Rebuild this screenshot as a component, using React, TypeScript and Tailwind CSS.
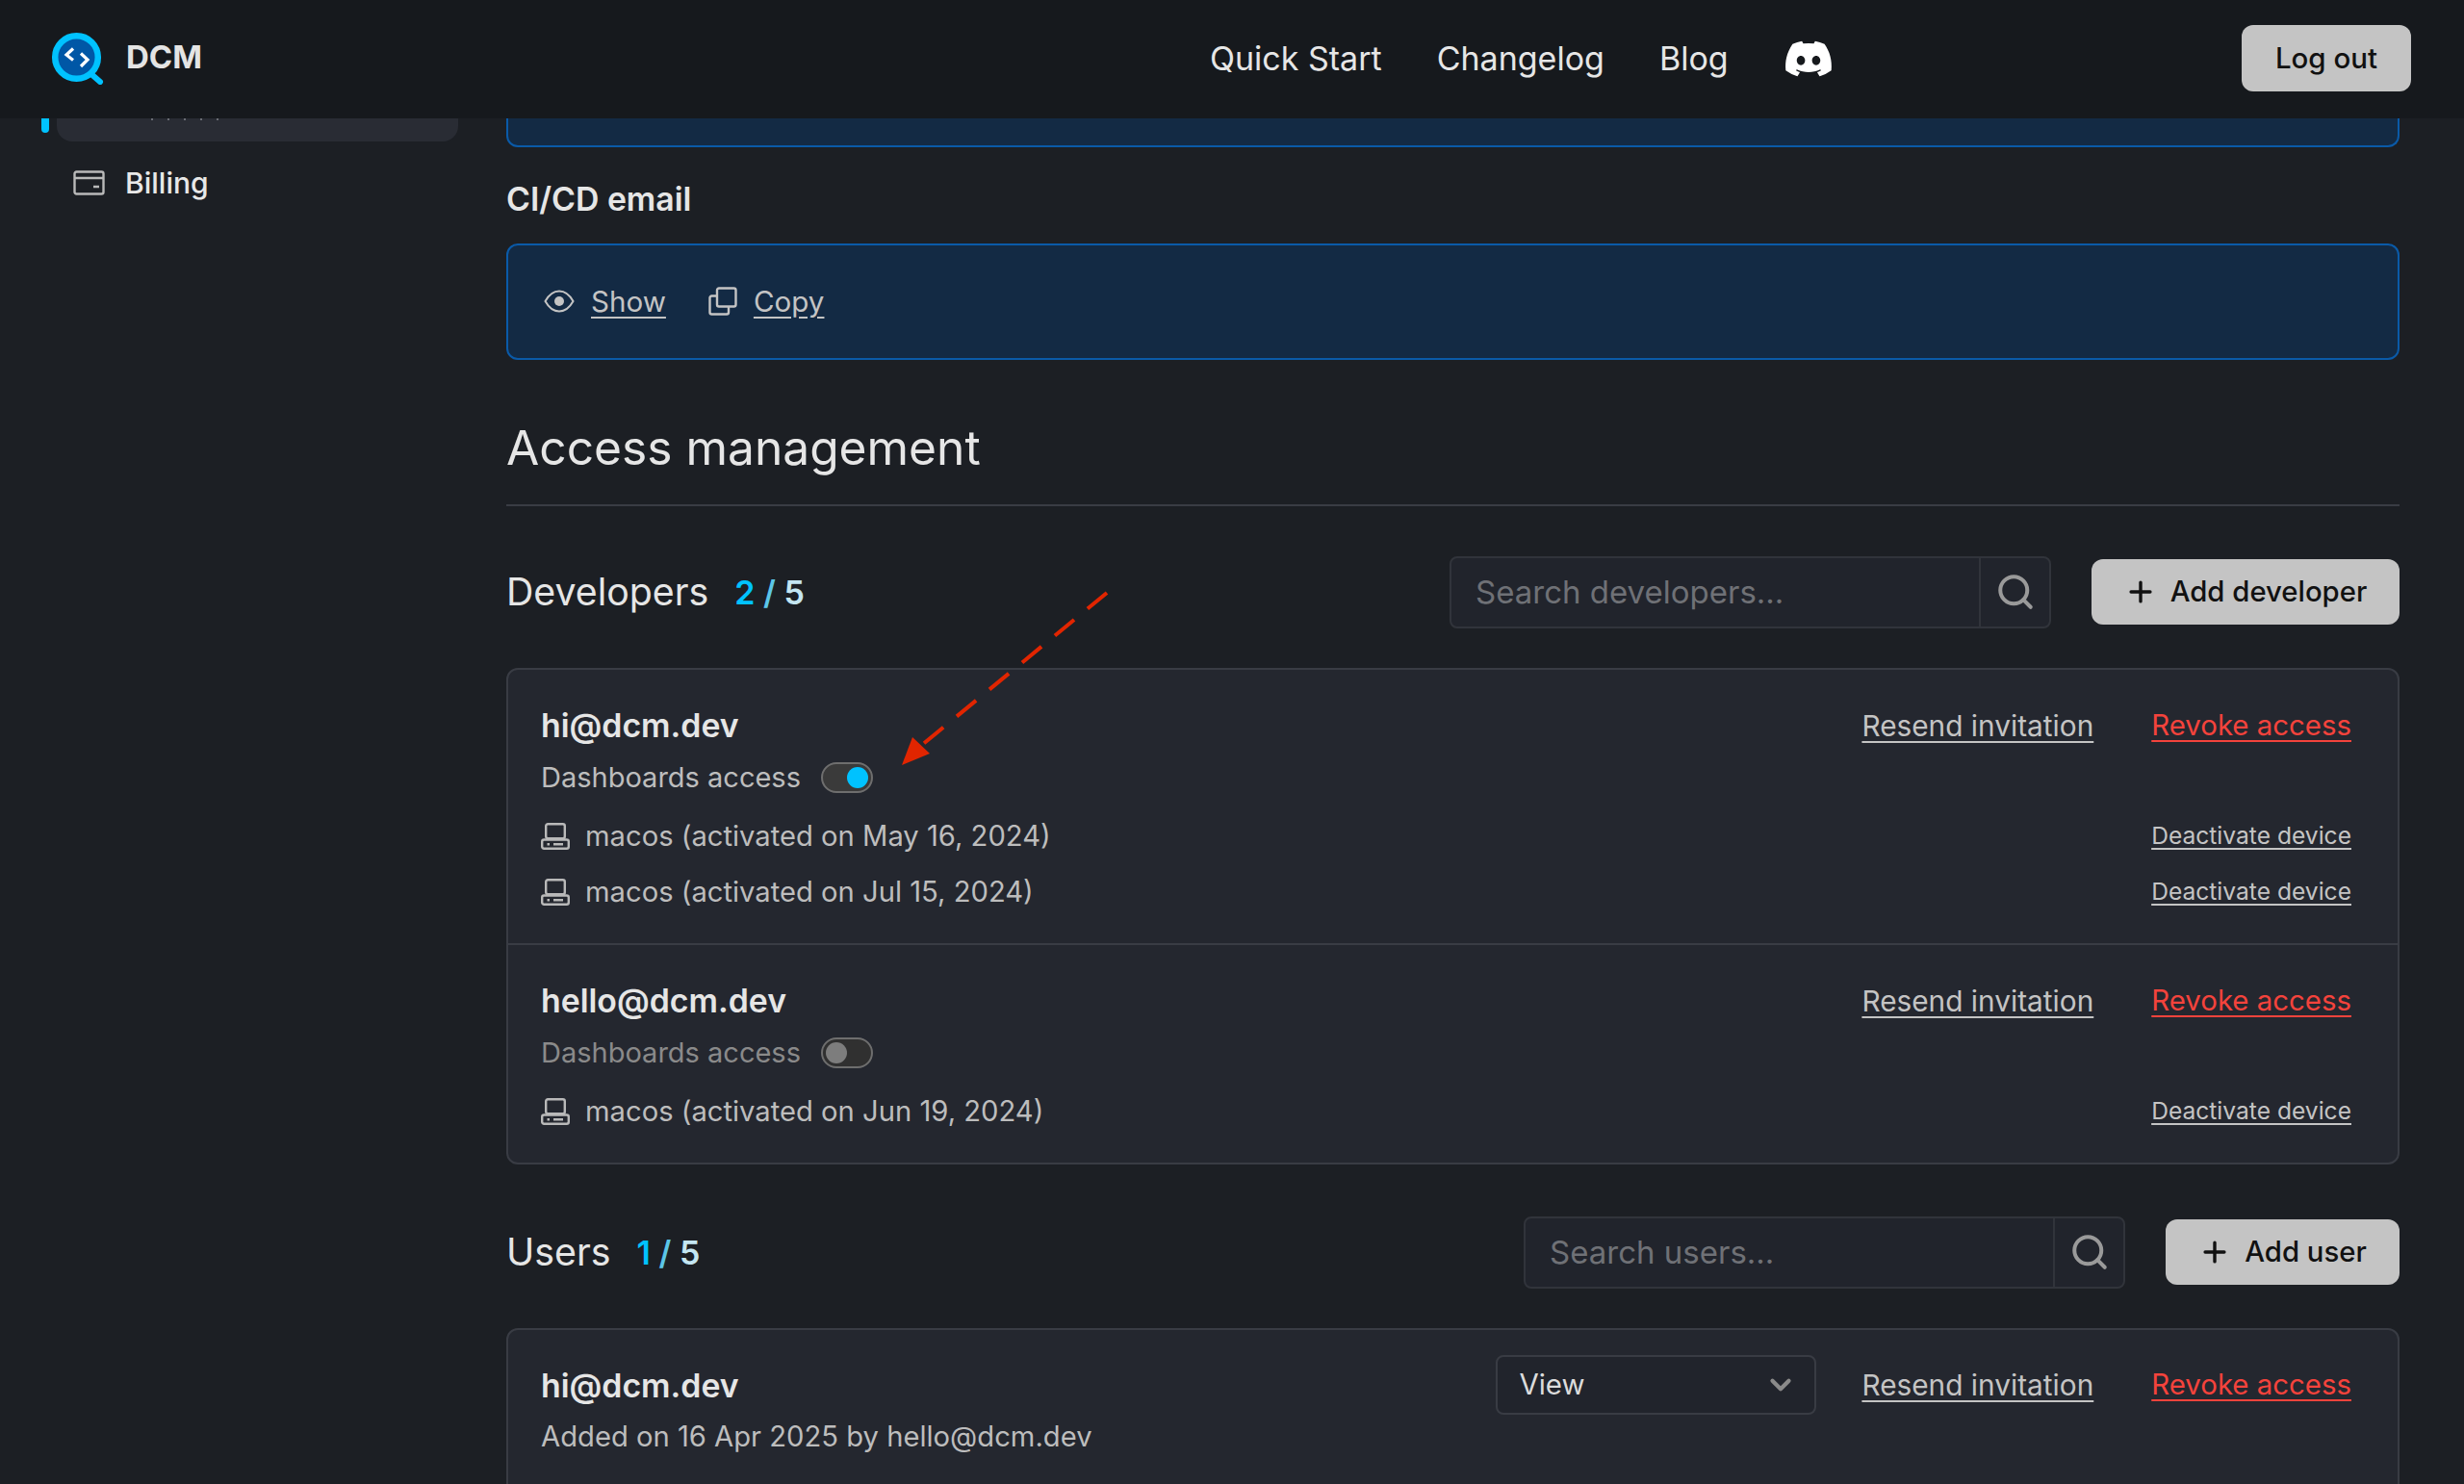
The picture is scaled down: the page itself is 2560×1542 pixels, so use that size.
import { Search, Plus, ChevronDown } from "lucide-react";
import { FaDiscord } from "react-icons/fa";

const Device = () => (
  <svg width="30" height="28" viewBox="0 0 30 28" fill="none" stroke="currentColor" strokeWidth="2.4" className="text-[#b9b9b9] shrink-0">
    <rect x="5.2" y="1.2" width="19.6" height="15" rx="2" />
    <rect x="1.2" y="17.5" width="27.6" height="9.3" rx="2" />
    <path d="M6.5 22.2h2.5M13 22.2h10" />
  </svg>
);

const Card = () => (
  <svg width="33" height="26" viewBox="0 0 33 26" fill="none" stroke="#b9b9b9" strokeWidth="2.4">
    <rect x="1.5" y="1.5" width="30" height="23" rx="2" />
    <path d="M1.5 8h30M21 17h6" />
  </svg>
);

const EyeIcon = () => (
  <svg width="32" height="24" viewBox="0 0 32 24" fill="none" className="shrink-0">
    <path d="M1.5 12C6 4 11 1.5 16 1.5S26 4 30.5 12C26 20 21 22.5 16 22.5S6 20 1.5 12Z" stroke="#c4c4c4" strokeWidth="2" />
    <circle cx="16" cy="12" r="5" fill="#c4c4c4" />
  </svg>
);

const CopyIcon = () => (
  <svg width="30" height="30" viewBox="0 0 30 30" fill="none" stroke="#c4c4c4" strokeWidth="2.4" className="shrink-0">
    <rect x="9" y="1.5" width="19.5" height="19" rx="2" />
    <path d="M9 9.5H3.5a2 2 0 0 0-2 2V26.5a2 2 0 0 0 2 2H19a2 2 0 0 0 2-2V20.5" />
  </svg>
);

const Logo = () => (
  <svg width="56" height="56" viewBox="0 0 56 56" fill="none">
    <path d="M44 46l8 7" stroke="#00c2ff" strokeWidth="6" strokeLinecap="round" />
    <circle cx="27.5" cy="27.5" r="22.3" fill="#0057a6" stroke="#00c2ff" strokeWidth="6.5" />
    <path d="M24 18.5l-7 6.5 7 5.5M32 23.5l7 6.5-7 7" stroke="#fff" strokeWidth="3.2" fill="none" />
  </svg>
);

function SearchBox({ placeholder, width }: { placeholder: string; width: string }) {
  return (
    <div className={`flex h-[75px] items-stretch rounded-lg border-2 border-[#31343b] bg-[#21242c] ${width}`}>
      <div className="flex-1 flex items-center pl-[25px] pt-[2px] text-[33px] text-[#6f7176]">{placeholder}</div>
      <div className="w-[73px] flex items-center justify-center border-l-2 border-[#31343b] text-[#9a9a9a]">
        <Search size={42} strokeWidth={2.3} />
      </div>
    </div>
  );
}

function AddButton({ label, width }: { label: string; width: string }) {
  return (
    <button className={`flex h-[68px] items-center justify-center gap-[14px] rounded-xl bg-[#c4c4c4] text-[29.3px] font-medium text-[#111] ${width}`}>
      <Plus size={34} strokeWidth={2.4} />
      {label}
    </button>
  );
}

function Links() {
  return (
    <div className="flex items-center gap-[60px] text-[29.4px]">
      <a className="underline underline-offset-[5px] text-[29.8px] text-[#c4c4c4]">Resend invitation</a>
      <a className="underline underline-offset-[5px] text-[#f4433c]">Revoke access</a>
    </div>
  );
}

function DeviceRow({ text }: { text: string }) {
  return (
    <div className="flex h-[58px] items-center justify-between">
      <div className="flex items-center gap-[16px] text-[29.2px] text-[#bdbdbd]">
        <Device />
        {text}
      </div>
      <a className="underline underline-offset-[4px] -translate-y-[1px] text-[24.6px] text-[#c4c4c4]">Deactivate device</a>
    </div>
  );
}

function Toggle({ on }: { on: boolean }) {
  return (
    <div className={`flex h-[32px] w-[54px] rounded-full border-2 border-[#6e6e6e] items-center px-[3px] ${on ? "justify-end bg-[#3a3a3a]" : "justify-start bg-[#303030]"}`}>
      <div className={`h-[22px] w-[22px] rounded-full ${on ? "bg-[#00c2ff]" : "bg-[#7d7d7d]"}`} />
    </div>
  );
}

function Developer({ email, on, devices, border }: { email: string; on: boolean; devices: string[]; border?: boolean }) {
  return (
    <div className={`pl-[34px] pr-[48px] pt-[38px] pb-[24px] ${border ? "border-b-2 border-[#393c44]" : ""}`}>
      <div className="flex items-center justify-between h-[40px]">
        <div className="text-[33.8px] font-semibold text-[#e6e6e6]">{email}</div>
        <Links />
      </div>
      <div className="mt-[14px] flex items-center gap-[21px] h-[40px]">
        <span className={`text-[29px] ${on ? "text-[#bdbdbd]" : "text-[#8a8a8a]"}`}>Dashboards access</span>
        <Toggle on={on} />
      </div>
      <div className="mt-[12px]">
        {devices.map((d) => (
          <DeviceRow key={d} text={d} />
        ))}
      </div>
    </div>
  );
}

export default function App() {
  return (
    <div className="relative h-[1542px] w-[2560px] overflow-hidden bg-[#1c1f24] font-['Inter',sans-serif]">
      <header className="flex h-[123px] items-center justify-between bg-[#16191d] pl-[52px] pr-[55px]">
        <div className="flex items-center gap-[23px] -translate-y-[2px]">
          <Logo />
          <span className="text-[33px] font-bold text-[#e4e4e4]">DCM</span>
        </div>
        <nav className="absolute left-[1257px] top-0 flex h-[121px] items-center gap-[57px] text-[34px] text-[#e6e6e6]">
          <a>Quick Start</a>
          <a>Changelog</a>
          <a>Blog</a>
          <FaDiscord size={52} className="text-white" />
        </nav>
        <button className="mb-[2px] h-[69px] w-[176px] rounded-xl bg-[#c4c4c4] text-[29.5px] font-medium text-[#111]">Log out</button>
      </header>

      <div className="flex">
        <aside className="w-[526px] shrink-0 pl-[43px]">
          <div className="flex items-start gap-[8px]">
            <div className="h-[15px] w-[8px] rounded-b-full bg-[#00c2ff]" />
            <div className="flex h-[24px] w-[417px] gap-[15px] rounded-b-2xl bg-[#292c34] pl-[98px]">
              <i className="h-[2px] w-[2px] bg-[#6a6d74]" />
              <i className="h-[2px] w-[2px] bg-[#6a6d74]" />
              <i className="h-[2px] w-[2px] bg-[#6a6d74]" />
              <i className="h-[2px] w-[2px] bg-[#6a6d74]" />
              <i className="h-[2px] w-[2px] bg-[#6a6d74]" />
            </div>
          </div>
          <div className="mt-[23px] flex h-[40px] items-center gap-[21px] pl-[33px] text-[30px] font-medium text-[#e8e8e8]">
            <Card />
            Billing
          </div>
        </aside>

        <main className="w-[1967px] shrink-0">
          <div className="h-[30px] rounded-b-xl border-2 border-t-0 border-[#0a5aa8] bg-[#132a44]" />
          <h3 className="mt-[30px] text-[33.8px] font-semibold leading-[48px] text-[#e6e6e6]">CI/CD email</h3>
          <div className="mt-[22px] flex h-[121px] items-center gap-[44px] rounded-xl border-2 border-[#0a5aa8] bg-[#132a44] pl-[37px]">
            <div className="flex items-center gap-[17px] text-[29.6px] text-[#c4c4c4]">
              <EyeIcon />
              <a className="underline underline-offset-[5px]">Show</a>
            </div>
            <div className="flex items-center gap-[17px] text-[29.6px] text-[#c4c4c4]">
              <CopyIcon />
              <a className="underline underline-offset-[5px]">Copy</a>
            </div>
          </div>

          <h1 className="mt-[61px] border-b-2 border-[#393c44] pb-[29px] text-[49.7px] leading-[60px] text-[#e6e6e6]">Access management</h1>

          <div className="mt-[50px] flex h-[78px] items-center justify-between">
            <div className="flex items-center gap-[27px]">
              <h2 className="text-[39.3px] text-[#e6e6e6]">Developers</h2>
              <span className="text-[34px] font-semibold"><span className="text-[#00c2ff]">2</span> <span className="text-[#5cc6e8]">/</span> <span className="text-[#c4e6f2]">5</span></span>
            </div>
            <div className="flex items-center gap-[42px]">
              <SearchBox placeholder="Search developers..." width="w-[625px]" />
              <AddButton label="Add developer" width="w-[320px]" />
            </div>
          </div>

          <div className="mt-[40px] rounded-xl border-2 border-[#393c44] bg-[#24272f]">
            <Developer email="hi@dcm.dev" on devices={["macos (activated on May 16, 2024)", "macos (activated on Jul 15, 2024)"]} border />
            <Developer email="hello@dcm.dev" on={false} devices={["macos (activated on Jun 19, 2024)"]} />
          </div>

          <div className="mt-[52px] flex h-[78px] items-center justify-between">
            <div className="flex items-center gap-[27px]">
              <h2 className="text-[39.3px] text-[#e6e6e6]">Users</h2>
              <span className="text-[34px] font-semibold"><span className="text-[#00c2ff]">1</span> <span className="text-[#5cc6e8]">/</span> <span className="text-[#c4e6f2]">5</span></span>
            </div>
            <div className="flex items-center gap-[42px]">
              <SearchBox placeholder="Search users..." width="w-[625px]" />
              <AddButton label="Add user" width="w-[243px]" />
            </div>
          </div>

          <div className="mt-[40px] rounded-xl border-2 border-[#393c44] bg-[#24272f] pl-[34px] pr-[48px] pt-[26px] h-[200px]">
            <div className="flex items-start justify-between">
              <div className="pt-[12px]">
                <div className="text-[33.8px] font-semibold leading-[40px] text-[#e6e6e6]">hi@dcm.dev</div>
                <div className="mt-[13px] text-[29.2px] leading-[40px] text-[#bdbdbd]">Added on 16 Apr 2025 by hello@dcm.dev</div>
              </div>
              <div className="flex items-center gap-[47px]">
                <div className="flex h-[62px] w-[333px] items-center justify-between rounded-lg border-2 border-[#393c44] bg-[#21242c] pl-[22px] pr-[18px] text-[29.4px] text-[#dcdcdc]">
                  View
                  <ChevronDown size={34} strokeWidth={3} className="text-[#8a8a8a]" />
                </div>
                <Links />
              </div>
            </div>
          </div>
        </main>
      </div>

      {/* annotation arrow */}
      <svg className="absolute left-[930px] top-[610px]" width="226" height="192" viewBox="0 0 226 192" fill="none">
        <path d="M220 6L28 164" stroke="#e12500" strokeWidth="4" strokeDasharray="26 18" />
        <path d="M7 185l11-29 18 17z" fill="#e12500" />
      </svg>
    </div>
  );
}
